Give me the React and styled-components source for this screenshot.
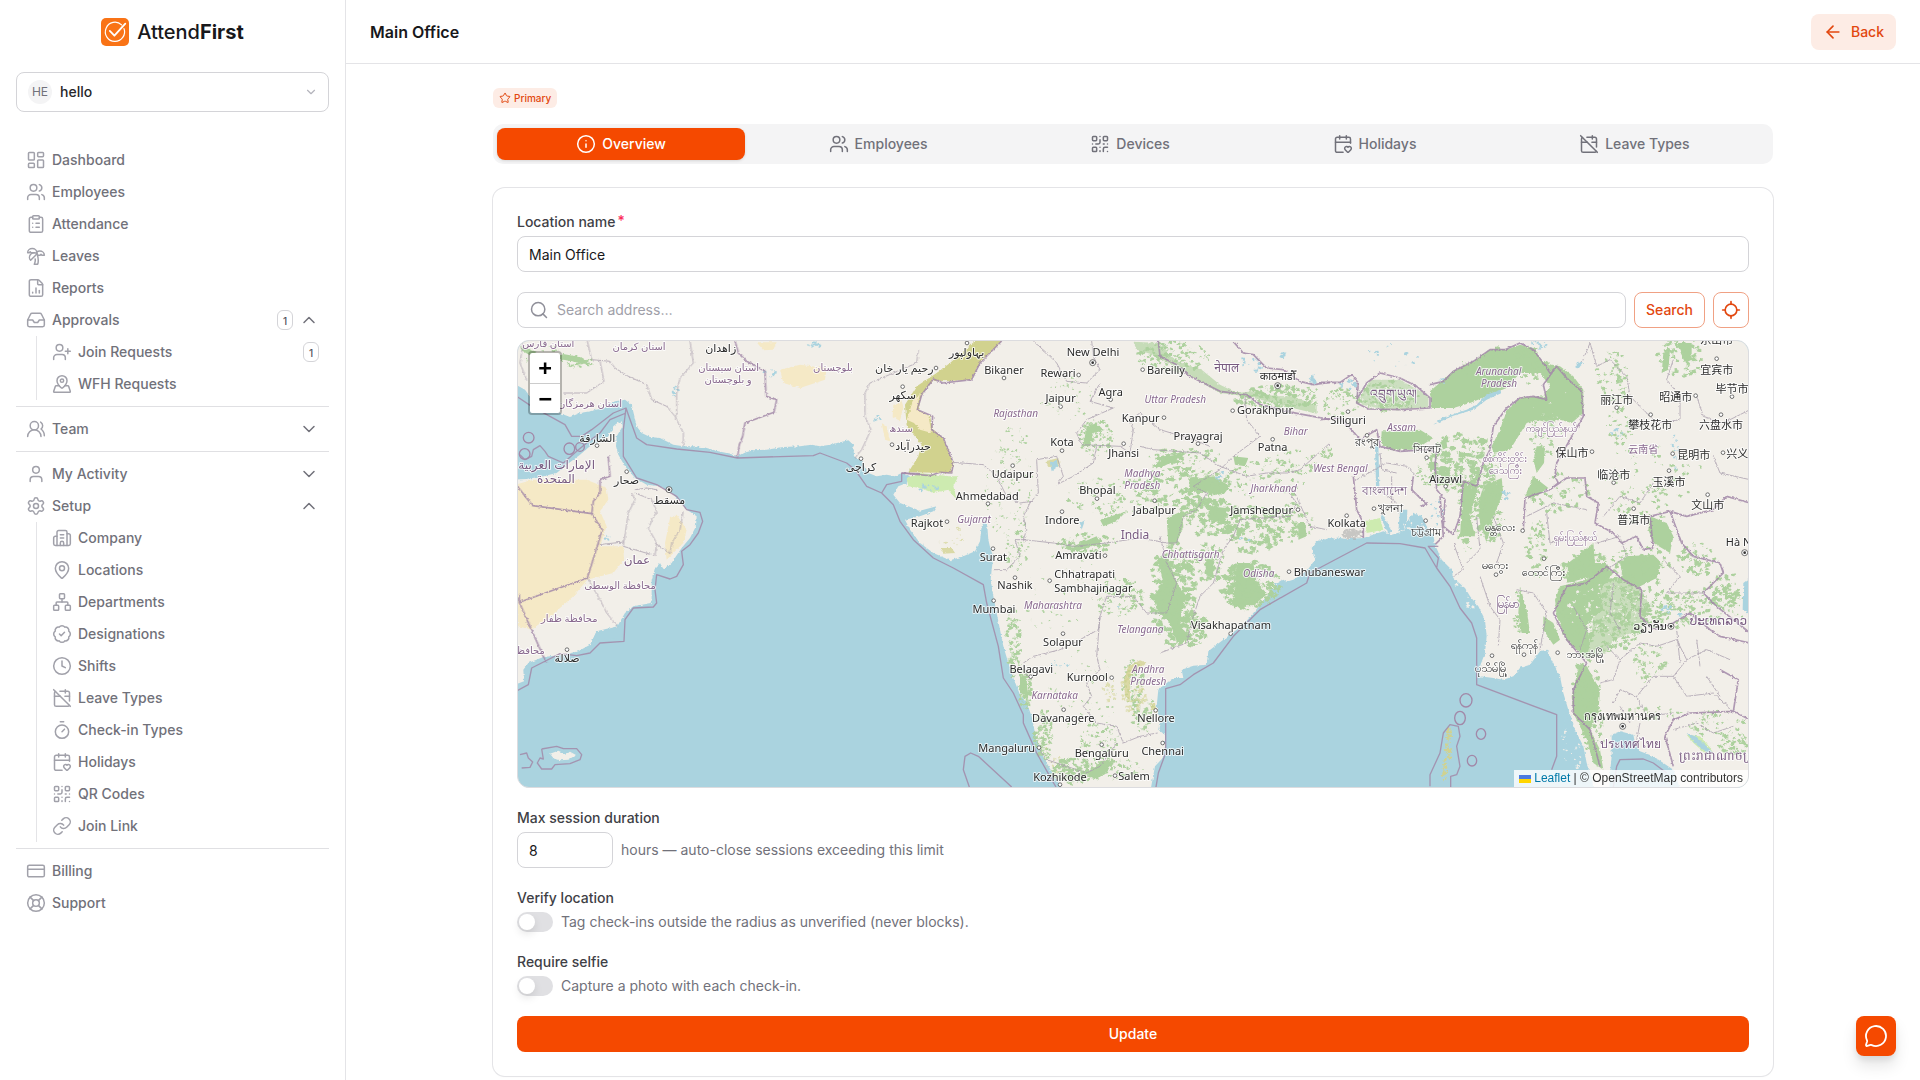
import React from "react";
import styled, { createGlobalStyle, css } from "styled-components";
import {
  ArrowLeft, BadgeCheck, Building2, CalendarHeart, CalendarOff, ChevronDown, ChevronUp,
  ClipboardList, Clock, CreditCard, FileChartColumn, Inbox, Info, LayoutDashboard, LifeBuoy,
  Link, Locate, MapPin, MapPinned, MessageCircle, Network, QrCode, Search, Settings, Star,
  Timer, TreePalm, User, UserPlus, Users, UsersRound,
} from "lucide-react";

const GlobalStyle = createGlobalStyle`
  *, *::before, *::after { box-sizing: border-box; }
  body { margin: 0; background: #fff; color: #27272a; font: 500 14px/20px Inter, "Open Sans", sans-serif; }
  button, input { font: inherit; color: inherit; margin: 0; }
  button { cursor: pointer; padding: 0; border: 0; background: none; }
  ul { list-style: none; margin: 0; padding: 0; }
  a { color: inherit; text-decoration: none; }
`;

/* ---------- shell ---------- */
const Shell = styled.div`
  display: grid;
  grid-template-columns: 346px minmax(0, 1fr);
  height: 100vh;
`;
const Sidebar = styled.aside`
  border-right: 1px solid #e4e4e7;
  padding: 16px;
  overflow-y: auto;
  scrollbar-width: none;
`;
const Brand = styled.a`
  display: flex;
  align-items: center;
  justify-content: center;
  gap: 8px;
  height: 32px;
  color: #18181b;
  font-size: 20px;
  line-height: 32px;
  b { font-weight: 700; }
`;
const OrgSwitcher = styled.button`
  display: flex;
  align-items: center;
  gap: 8px;
  width: 100%;
  height: 40px;
  margin: 24px 0 32px;
  padding: 0 10px 0 11px;
  border: 1px solid #d4d4d8;
  border-radius: 8px;
  text-align: left;
  svg { margin-left: auto; color: #b4b4bc; }
`;
const Avatar = styled.span`
  display: grid;
  place-items: center;
  width: 24px;
  height: 24px;
  border-radius: 50%;
  background: #f4f4f5;
  color: #71717a;
  font-size: 12px;
  font-weight: 400;
`;
const NavRow = styled.a`
  display: flex;
  align-items: center;
  gap: 6px;
  width: 100%;
  height: 32px;
  padding: 0 10px;
  color: #71717a;
  > svg:first-child { color: #a1a1aa; }
  > span:first-of-type { flex: 1; text-align: left; }
`;
const Count = styled.span`
  display: grid;
  place-items: center;
  width: 16px;
  height: 20px;
  border: 1px solid #d4d4d8;
  border-radius: 6px;
  font-size: 10px;
  color: #52525b;
`;
const SubNav = styled.ul`
  margin-left: 20px;
  padding-left: 5px;
  border-left: 1px solid #e4e4e7;
`;
const Rule = styled.hr`
  height: 1px;
  margin: 6px 0;
  border: 0;
  background: #e0e0e3;
`;

/* ---------- main ---------- */
const Main = styled.div`
  display: flex;
  flex-direction: column;
  min-width: 0;
  height: 100vh;
`;
const TopBar = styled.header`
  display: flex;
  flex: none;
  align-items: center;
  justify-content: space-between;
  height: 64px;
  padding: 0 24px;
  border-bottom: 1px solid #e4e4e7;
`;
const Title = styled.h1`
  margin: 0;
  color: #18181b;
  font-size: 16px;
  font-weight: 600;
  line-height: 24px;
`;
const Button = styled.button`
  display: flex;
  align-items: center;
  justify-content: center;
  gap: 8px;
  flex: none;
  height: 36px;
  padding: 0 12px;
  border-radius: 8px;
  ${({ $kind }) =>
    $kind === "soft" ? css`background: #fdece5; color: #e2470f;`
    : $kind === "outline" ? css`padding: 0 11px; border: 1px solid #f0a184; color: #e2470f; background: #fff;`
    : css`background: #f54900; color: #fff;`}
  ${({ $square }) => $square && css`width: 36px; padding: 0;`}
`;
const Scroller = styled.main`
  flex: 1;
  min-height: 0;
  padding: 24px;
  overflow-y: auto;
  scrollbar-width: none;
`;
const Column = styled.div`
  display: flex;
  flex-direction: column;
  align-items: flex-start;
  max-width: 1280px;
  margin: 0 auto;
`;
const PrimaryTag = styled.span`
  display: flex;
  align-items: center;
  gap: 3px;
  height: 20px;
  padding: 0 6px;
  border-radius: 6px;
  background: #fdece5;
  color: #e2470f;
  font-size: 10px;
  line-height: 16px;
`;
const Tabs = styled.nav`
  display: flex;
  gap: 4px;
  width: 100%;
  margin: 16px 0 24px;
  padding: 4px;
  border-radius: 10px;
  background: #f4f4f5;
`;
const Tab = styled.button`
  display: flex;
  flex: 1 1 auto;
  align-items: center;
  justify-content: center;
  gap: 6px;
  height: 32px;
  border-radius: 8px;
  color: ${({ $active }) => ($active ? "#fff" : "#71717a")};
  background: ${({ $active }) => ($active ? "#f54900" : "transparent")};
  box-shadow: ${({ $active }) => ($active ? "0 1px 3px rgba(0,0,0,.12)" : "none")};
`;
const Card = styled.form`
  display: flex;
  flex-direction: column;
  gap: 20px;
  width: 100%;
  padding: 24px;
  border-radius: 12px;
  box-shadow: 0 0 0 1px #e4e4e7, 0 1px 2px rgba(0,0,0,.04);
`;
const Field = styled.div`
  display: flex;
  flex-direction: column;
  align-items: flex-start;
  gap: 4px;
`;
const Label = styled.label`
  color: #3f3f46;
  sup { margin-left: 2px; color: #fb2c5a; font-size: 14px; line-height: 0; vertical-align: 1px; }
`;
const Input = styled.input`
  width: ${({ $short }) => ($short ? "96px" : "100%")};
  height: 36px;
  padding: 0 11px;
  border: 1px solid #d4d4d8;
  border-radius: 8px;
  background: #fff;
  color: #18181b;
  font-weight: 400;
  outline: 0;
  appearance: textfield;
`;
const Inline = styled.div`
  display: flex;
  align-items: center;
  gap: 8px;
  width: 100%;
`;
const Hint = styled.span`
  color: #71717a;
  font-weight: 400;
`;
const SearchBox = styled.label`
  display: flex;
  flex: 1;
  align-items: center;
  gap: 8px;
  height: 36px;
  padding: 0 11px;
  border: 1px solid #d4d4d8;
  border-radius: 8px;
  color: #8f8f99;
  input { flex: 1; min-width: 0; border: 0; padding: 0; outline: 0; background: none; }
  input::placeholder { color: #9f9fa9; font-weight: 400; opacity: 1; }
`;
const AddressBlock = styled.div`
  display: flex;
  flex-direction: column;
  gap: 12px;
`;
const Switch = styled.input`
  appearance: none;
  flex: none;
  display: flex;
  width: 36px;
  height: 20px;
  margin: 0;
  padding: 2px;
  border-radius: 10px;
  background: #e0e0e3;
  &::before {
    content: "";
    width: 16px;
    height: 16px;
    border-radius: 50%;
    background: #fff;
    box-shadow: 0 4px 8px rgba(0,0,0,.1);
  }
  &:checked { justify-content: flex-end; background: #f54900; }
`;
const ChatButton = styled.button`
  position: fixed;
  right: 24px;
  bottom: 24px;
  display: grid;
  place-items: center;
  width: 40px;
  height: 40px;
  border-radius: 8px;
  background: #f54900;
  color: #fff;
  box-shadow: 0 10px 15px rgba(0,0,0,.1), 0 4px 6px rgba(0,0,0,.08);
`;

/* ---------- map ---------- */
const MapFrame = styled.div`
  position: relative;
  height: 448px;
  overflow: hidden;
  border: 1px solid #dcdcdf;
  border-radius: 12px;
  background: #aad3df;
  > svg { display: block; width: 100%; height: 100%; }
`;
const ZoomControl = styled.div`
  position: absolute;
  top: 10px;
  left: 10px;
  overflow: hidden;
  border: 2px solid rgba(0,0,0,.25);
  border-radius: 4px;
  background: #fff;
  background-clip: padding-box;
`;
const ZoomButton = styled.button`
  display: block;
  width: 30px;
  height: 30px;
  color: #000;
  font: 700 22px/30px "DejaVu Sans Mono", monospace;
  & + & { border-top: 1px solid #ccc; }
`;
const Attribution = styled.div`
  position: absolute;
  right: 0;
  bottom: 0;
  padding: 0 5px;
  background: rgba(255,255,255,.8);
  color: #333;
  font: 400 12px/17px "Liberation Sans", Arial, sans-serif;
  a { color: #0078a8; }
  svg { vertical-align: -1px; }
`;

const Land = styled.path`fill: #f2efe9;`;
const Water = styled.path`fill: #aad3df;`;
const Sand = styled.path`fill: #f5e9c6;`;
const Forest = styled.path`fill: #add19e;`;
const Scrub = styled.path`fill: #d1d28e;`;
const Marsh = styled.path`fill: #cdebb0;`;
const Country = styled.path`
  fill: none;
  stroke: #a288a8;
  stroke-opacity: 0.85;
  stroke-width: ${({ $w }) => $w || 5};
  stroke-linejoin: round;
`;
const Province = styled.path`
  fill: none;
  stroke: #a79cab;
  stroke-opacity: 0.75;
  stroke-width: 3;
`;
const MapText = styled.text`
  font-family: "Noto Sans", "Noto Sans CJK SC", "DejaVu Sans", sans-serif;
  font-weight: 400;
  text-anchor: middle;
  paint-order: stroke;
  stroke: rgba(255,255,255,.75);
  stroke-width: 6px;
  stroke-linejoin: round;
  ${({ $t }) =>
    $t === "state" ? css`font-size: 30px; font-style: italic; fill: #89698f;`
    : $t === "region" ? css`font-size: 30px; fill: #89698f;`
    : $t === "country" ? css`font-size: 36px; fill: #785a80;`
    : css`font-size: 33px; fill: #2b2b2b;`}
`;
const Dot = styled.circle`fill: #fff; stroke: #555; stroke-width: 2.5;`;

/* small irregular patches spread over an ellipse: [cx, cy, rx, ry, count, size] */
function patches(list, seed) {
  let s = seed;
  const rnd = () => ((s = (s * 16807) % 2147483647) / 2147483647);
  let d = "";
  for (const [cx, cy, rx, ry, n, size] of list) {
    for (let i = 0; i < n; i++) {
      const a = rnd() * 6.283, r = Math.sqrt(rnd());
      const x = cx + Math.cos(a) * rx * r, y = cy + Math.sin(a) * ry * r;
      const m = size * (0.25 + rnd());
      for (let k = 0; k < 7; k++) {
        const t = (k / 7) * 6.283, q = m * (0.35 + rnd() * 0.9);
        d += `${k ? "L" : "M"}${(x + Math.cos(t) * q).toFixed(0)} ${(y + Math.sin(t) * q * 0.8).toFixed(0)}`;
      }
      d += "Z";
    }
  }
  return d;
}

const westLabels = [
  ["region", 145, 51, "استان فارس"], ["region", 417, 62, "استان کرمان"], ["city", 662, 68, "زاهدان"],
  ["region", 686, 123, "استان سیستان"], ["region", 684, 160, "و بلوچستان"], ["region", 999, 123, "بلوچستان"],
  ["region", 270, 233, "استان هرمزگان"], ["city", 292, 336, "الشارقة"], ["country", 170, 417, "الإمارات العربية"],
  ["country", 168, 461, "المتحدة"], ["city", 380, 462, "صحار"], ["city", 508, 522, "مسقط"],
  ["country", 411, 704, "عمان"], ["region", 360, 777, "محافظة الوسطى"], ["region", 208, 876, "محافظة ظفار"],
  ["region", 85, 974, "محافظة"], ["city", 201, 996, "صلالة"], ["city", 1083, 423, "کراچی"],
  ["region", 1203, 308, "سندھ"], ["city", 1239, 361, "حیدرآباد"], ["city", 1208, 208, "سکھر"], ["city", 1213, 128, "رحیم یار خان"],
];
const indiaLabels = [
  ["city", 200, 78, "بہاولپور"], ["city", 312, 132, "Bikaner"], ["city", 579, 80, "New Delhi"], ["city", 474, 143, "Rewari"],
  ["city", 798, 132, "Bareilly"], ["country", 980, 126, "नेपाल"], ["city", 1133, 150, "काठमाडौँ"], ["city", 482, 218, "Jaipur"],
  ["city", 632, 198, "Agra"], ["state", 826, 221, "Uttar Pradesh"], ["state", 347, 262, "Rajasthan"], ["city", 722, 277, "Kanpur"],
  ["city", 1095, 254, "Gorakhpur"], ["state", 1187, 316, "Bihar"], ["city", 486, 350, "Kota"], ["city", 671, 383, "Jhansi"],
  ["city", 894, 331, "Prayagraj"], ["city", 1118, 364, "Patna"], ["city", 338, 444, "Udaipur"], ["state", 727, 443, "Madhya"],
  ["state", 727, 479, "Pradesh"], ["city", 592, 494, "Bhopal"], ["city", 262, 510, "Ahmedabad"], ["state", 1121, 488, "Jharkhand"],
  ["city", 763, 554, "Jabalpur"], ["city", 1085, 554, "Jamshedpur"], ["city", 487, 582, "Indore"], ["state", 222, 581, "Gujarat"],
  ["city", 81, 591, "Rajkot"], ["country", 705, 629, "India"], ["city", 280, 693, "Surat"], ["city", 535, 689, "Amravati"],
  ["state", 872, 685, "Chhattisgarh"], ["city", 554, 746, "Chhatrapati"], ["city", 580, 787, "Sambhajinagar"], ["city", 345, 779, "Nashik"],
  ["state", 1076, 741, "Odisha"], ["city", 282, 851, "Mumbai"], ["state", 459, 839, "Maharashtra"], ["state", 721, 909, "Telangana"],
  ["city", 993, 899, "Visakhapatnam"], ["city", 489, 950, "Solapur"], ["city", 394, 1031, "Belagavi"], ["city", 562, 1055, "Kurnool"],
  ["state", 745, 1031, "Andhra"], ["state", 745, 1067, "Pradesh"], ["state", 464, 1109, "Karnataka"], ["city", 490, 1178, "Davanagere"],
  ["city", 768, 1177, "Nellore"], ["city", 320, 1266, "Mangaluru"], ["city", 605, 1283, "Bengaluru"], ["city", 788, 1275, "Chennai"],
  ["city", 480, 1354, "Kozhikode"], ["city", 702, 1350, "Salem"],
];
const eastLabels = [
  ["state", 536, 136, "Arunachal"], ["state", 537, 172, "Pradesh"], ["country", 219, 205, "འབྲུག་ཡུལ།"], ["city", 84, 282, "Siliguri"],
  ["state", 245, 305, "Assam"], ["city", 141, 350, "রংপুর"], ["city", 320, 369, "সিলেট"], ["state", 61, 428, "West Bengal"],
  ["city", 377, 459, "Aizawl"], ["country", 193, 497, "বাংলাদেশ"], ["city", 212, 548, "খুলনা"], ["city", 80, 591, "Kolkata"],
  ["city", 317, 620, "চট্টগ্রাম"], ["city", 28, 738, "Bhubaneswar"], ["region", 694, 306, "ကချင်ပြည်နယ်"], ["region", 555, 396, "စစ်ကိုင်းတိုင်း"],
  ["region", 556, 433, "ဒေသကြီး"], ["city", 540, 605, "မန္တလေး"], ["region", 766, 634, "ရှမ်းပြည်နယ်"], ["city", 527, 717, "မကွေး"],
  ["city", 672, 740, "တောင်ကြီး"], ["country", 563, 835, "မြန်မာ"], ["city", 612, 959, "ရန်ကုန်"], ["city", 514, 1028, "ပုသိမ်မြို့"],
  ["city", 795, 985, "ဘားအံမြို့"], ["city", 1190, 42, "乐山市"], ["city", 1190, 132, "宜宾市"], ["city", 1236, 190, "毕节市"],
  ["city", 890, 223, "丽江市"], ["city", 1067, 213, "昭通市"], ["city", 991, 299, "攀枝花市"], ["city", 1203, 299, "六盘水市"],
  ["region", 970, 371, "云南省"], ["city", 756, 383, "保山市"], ["city", 1121, 388, "昆明市"], ["city", 1268, 385, "兴义市"],
  ["city", 881, 447, "临沧市"], ["city", 1047, 468, "玉溪市"], ["city", 1163, 539, "文山市"], ["city", 941, 582, "普洱市"],
  ["city", 1270, 650, "Hà Nội"], ["city", 990, 902, "ວຽງຈັນ"], ["country", 1195, 886, "ປະເທດລາວ"], ["city", 908, 1172, "กรุงเทพมหานคร"],
  ["country", 930, 1255, "ประเทศไทย"], ["country", 1190, 1292, "ព្រះរាជាណាចក្រ"],
];
const Labels = ({ items }) =>
  items.map(([t, x, y, s], i) => <MapText key={i} $t={t} x={x} y={y}>{s}</MapText>);
const Dots = ({ at }) => at.map(([x, y], i) => <Dot key={i} cx={x} cy={y} r="5.5" />);
const Capital = ({ x, y }) => <g><Dot cx={x} cy={y} r="9" /><circle cx={x} cy={y} r="4" fill="#333" /></g>;

const AreaMap = () => (
  <svg viewBox="54 34 3690 1338" preserveAspectRatio="xMidYMid slice" role="img" aria-label="Map of South Asia">
    <defs>
      <filter id="rough" x="-5%" y="-5%" width="110%" height="110%">
        <feTurbulence type="fractalNoise" baseFrequency="0.12" numOctaves="2" seed="4" result="n" />
        <feDisplacementMap in="SourceGraphic" in2="n" scale="9" xChannelSelector="R" yChannelSelector="G" />
      </filter>
    </defs>
    <g filter="url(#rough)">
      <Land d="M30 0V155L75 180 100 215 130 235 165 245 210 262 240 250 270 245 310 235 345 215 375 210 395 225 402 255 410 290 425 310 450 322 480 325 520 345 550 350 590 350 620 355 655 365 690 372 712 380 730 370 760 362 800 360 850 352 900 350 935 345 960 350 990 345 1020 338 1045 332 1060 345 1062 380 1085 395 1105 430 1130 440 1160 435 1185 440 1205 430 1290 432V0Z" />
      <Land d="M30 450L80 448 130 440 170 430 200 405 240 375 275 345 300 335 325 320 340 290 352 280 365 275 368 290 350 320 348 350 355 375 375 410 405 445 440 465 480 470 515 490 545 520 560 540 590 560 588 590 570 625 545 655 528 680 515 700 490 718 480 700 465 715 455 750 455 820 400 830 375 850 352 890 290 905 280 925 270 945 235 965 190 975 130 982 85 1000 70 1020 72 1055 30 1070Z" />
      <Land d="M150 1272L175 1263 195 1272 210 1266 228 1276 205 1290 180 1292 160 1285Z" />
      <Sand d="M30 470L100 450 260 450 320 475 325 510 300 545 320 590 300 650 370 650 372 690 340 730 262 750 220 800 140 870 95 900 54 890ZM510 565L530 555 560 600 550 640 520 670 500 690 495 640ZM840 120L900 105 980 115 975 150 900 175 850 160ZM1180 225L1210 220 1225 250 1200 275 1178 260ZM770 38H830L820 60 790 62ZM1145 280L1160 290 1170 335 1155 330Z" />
      <Forest d="M60 50L110 66 95 80 64 62ZM185 72L240 82 275 105 240 100 180 88Z" />
      <Water d="M290 905L370 895 368 925 300 932 272 945Z" />
      <Forest d={patches([[130, 80, 60, 40, 40, 5], [230, 95, 50, 18, 40, 6]], 21)} />
      <Water d={patches([[810, 128, 20, 14, 10, 6], [525, 185, 10, 15, 6, 6], [325, 625, 12, 8, 6, 5], [945, 45, 25, 8, 9, 6], [1130, 265, 14, 8, 6, 5]], 5)} />
    </g>

    <g transform="translate(1200 0)" filter="url(#rough)">
      <Land d="M0 0H1310V628L1290 625 1250 635 1235 655 1245 690 1220 725 1180 750 1130 765 1090 815 1060 850 1030 885 990 915 950 945 925 965 920 1005 880 1008 845 1020 850 1045 820 1045 800 1060 775 1080 770 1130 780 1170 775 1200 795 1215 795 1250 788 1285 765 1310 750 1390H495L470 1350 440 1300 420 1260 405 1210 395 1160 380 1120 360 1095 340 1045 325 1000 310 950 300 900 290 850 280 800 272 750 275 720 280 680 272 660 265 630 262 590 255 570 245 590 240 635 225 665 190 680 150 692 100 670 60 640 30 600 15 570 60 560 100 545 110 530 60 543 0 520-20 495-5 470 20 460 30 440 0 430Z" />
      <Scrub d="M225 34H305L240 100 215 150 130 155 100 150 65 195 55 240 90 260 100 300 130 325 160 400 155 430 25 428 55 380 65 345 20 290 15 225 50 170 110 130 150 100Z" />
      <Sand d="M60 190L50 240 85 258 95 310 60 300 42 280 20 270 40 210ZM0 200L10 230 0 275Z" />
      <Marsh d="M20 445L60 430 150 440 175 440 160 470 170 510 145 480 100 490 60 475 25 470Z" />
      <Forest opacity=".65" d="M700 36L775 40 830 95 905 120 960 165 1010 190 1060 185 1120 200 1180 200 1240 225 1290 235V262L1200 240 1120 220 1040 200 960 190 890 150 830 115 760 75 710 60Z" />
      <Forest d="M560 290L590 280 610 300 580 310 570 350 550 345ZM755 410L800 380 860 370 830 390 780 415ZM870 450L940 440 990 470 970 495 890 485 865 490ZM800 565L845 545 850 590 830 640 805 645ZM775 690L800 670 830 760 860 800 845 840 840 890 880 930 830 935 810 880 770 840 760 800 790 760ZM930 530L980 535 975 580 930 570ZM915 690L940 690 940 745 920 740ZM1010 700L1060 700 1070 760 1100 790 1060 830 1000 830 1005 780ZM1195 580L1215 580 1220 620 1195 630ZM560 1340L600 1295 640 1290 620 1330 590 1350ZM520 650L590 620 600 640 530 665ZM600 570L680 545 650 575 610 590ZM360 1040L378 1040 385 1100 360 1090ZM1000 380L1045 385 1035 410 1005 405Z" />
      <Forest d={patches([
        [590, 325, 50, 55, 110, 6], [650, 500, 150, 60, 100, 6], [560, 640, 90, 28, 100, 7], [850, 470, 150, 60, 150, 9],
        [860, 380, 110, 25, 70, 8], [930, 560, 90, 60, 120, 10], [1060, 600, 90, 70, 150, 9], [1170, 580, 70, 60, 110, 7],
        [1050, 770, 90, 75, 210, 10], [820, 790, 70, 160, 230, 10], [870, 900, 60, 50, 70, 9], [930, 700, 50, 60, 80, 7],
        [660, 800, 70, 60, 90, 7], [350, 660, 40, 60, 60, 5], [340, 930, 22, 110, 100, 6], [375, 1080, 20, 60, 90, 6],
        [430, 1220, 28, 80, 130, 6], [520, 1325, 60, 40, 130, 8], [600, 1240, 60, 70, 90, 5], [700, 1060, 35, 70, 90, 6],
        [730, 1150, 35, 60, 60, 6], [320, 480, 80, 140, 90, 4], [340, 350, 60, 60, 40, 4], [500, 200, 80, 70, 50, 4],
        [1100, 450, 120, 60, 70, 7], [1170, 400, 100, 40, 50, 6], [1140, 200, 150, 35, 170, 8], [820, 80, 110, 45, 130, 7], [650, 1320, 90, 30, 50, 6],
        [500, 800, 130, 130, 60, 4], [550, 1100, 100, 140, 60, 4],
      ], 77)} />
      <Scrub opacity=".75" d="M685 1010L720 992 740 1000 690 1040 690 1110 675 1100 672 1050ZM435 395L475 385 480 410 445 412ZM120 655L155 655 165 670 130 672ZM750 1120L765 1120 770 1150 755 1140Z" />
      <Scrub opacity=".6" d={patches([[700, 1080, 40, 80, 45, 7], [630, 1080, 20, 40, 20, 6], [145, 610, 60, 40, 16, 5], [450, 1290, 30, 50, 25, 5]], 41)} />
      <Water d="M450 400L470 390 475 410 455 425ZM540 580L555 572 545 600ZM1125 765L1150 750 1160 757 1130 772Z" />
      <Water d={patches([[1060, 100, 40, 25, 12, 7], [1235, 145, 25, 15, 12, 8], [1150, 75, 8, 12, 5, 6], [960, 440, 12, 18, 6, 6], [480, 1005, 30, 12, 6, 5], [1030, 625, 20, 10, 6, 5], [650, 820, 10, 20, 5, 4], [85, 475, 30, 10, 8, 7]], 9)} />
    </g>

    <g transform="translate(2460 0)" filter="url(#rough)">
      <Land d="M-10 0H1310V1390H1085L1060 1320 1030 1300 1000 1280 960 1265 945 1240 940 1215 900 1205 875 1215 875 1280 870 1330 868 1390H822L815 1340 800 1300 790 1250 765 1200 745 1140 730 1090 720 1040 700 1000 680 960 660 965 630 1005 600 1015 580 1040 550 1050 520 1045 480 1040 480 1010 495 970 500 920 495 870 475 830 450 800 435 775 400 745 395 720 365 690 345 645 340 615 320 590 305 560 280 550 265 570 250 605 215 615 190 605 130 625 80 628 40 622-10 630Z" />
      <Forest d="M330 185L400 125 460 95 510 60 560 60 600 45 640 55 670 100 720 110 760 140 790 180 790 250 755 280 720 270 690 280 650 270 620 280 570 360 520 370 515 350 540 300 560 240 600 205 670 200 690 170 660 130 600 130 560 175 500 200 450 220 400 235 335 235ZM185 305L240 305 300 300 340 325 285 360 210 360 183 345ZM490 470L545 445 550 490 520 560 500 640 480 580 475 520ZM430 450L475 465 450 560 465 620 420 620ZM640 440L685 475 640 505 615 500ZM650 350L675 350 672 400 650 430 640 390ZM600 770L620 840 630 910 605 910 595 850ZM745 700L820 640 825 700 860 700 870 720 800 745 740 760ZM720 770L800 750 860 710 880 730 840 780 850 840 800 880 810 940 800 990 740 930 710 860 705 810ZM990 560L1040 580 1060 620 1050 670 1000 640 985 600ZM920 680L1000 675 1025 700 1010 745 950 775 910 750 900 700ZM780 1000L800 1010 840 1080 835 1150 810 1200 840 1260 850 1320 820 1300 800 1230 760 1150 755 1100ZM1030 70L1050 60 1045 120 1025 130ZM1070 40H1115L1115 90 1095 100ZM360 410L390 420 385 470 365 460ZM670 860L700 880 720 930 700 945 670 900Z" />
      <Forest opacity=".55" d="M120 205L150 150 240 150 300 185 325 200 325 235 200 240 125 225Z" />
      <Forest opacity=".6" d="M840 760L910 740 965 780 990 830 960 900 880 930 860 970 800 990Z" />
      <Marsh d="M135 575L180 565 190 600 140 610ZM1100 1215L1140 1220 1180 1265 1160 1275 1120 1240Z" />
      <Forest d={patches([
        [560, 110, 140, 60, 90, 9], [200, 200, 100, 45, 130, 7], [430, 400, 110, 90, 210, 10], [510, 540, 45, 100, 100, 8], [440, 560, 30, 110, 70, 8],
        [680, 320, 50, 60, 40, 7], [720, 490, 90, 60, 60, 7], [650, 660, 30, 90, 60, 7], [600, 850, 20, 70, 40, 6], [800, 720, 70, 60, 90, 9],
        [850, 850, 130, 120, 260, 9], [950, 820, 110, 90, 150, 8], [960, 700, 90, 50, 60, 8], [1060, 840, 90, 60, 70, 7], [1180, 830, 110, 60, 90, 8],
        [880, 140, 50, 80, 70, 7], [900, 290, 40, 60, 50, 6], [1080, 80, 70, 60, 60, 8], [1000, 430, 150, 90, 60, 6], [960, 520, 100, 60, 50, 7],
        [1130, 690, 60, 50, 50, 8], [1210, 780, 50, 60, 50, 8], [990, 1000, 50, 60, 70, 6], [1190, 1180, 90, 40, 60, 6], [1000, 1150, 80, 20, 30, 6],
        [1240, 1240, 45, 35, 60, 7], [820, 1200, 35, 90, 90, 7], [800, 1060, 40, 70, 60, 9], [60, 220, 60, 50, 60, 6], [20, 370, 22, 20, 20, 6], [320, 430, 30, 40, 30, 5],
      ], 133)} />
      <Land d={patches([[850, 840, 110, 80, 60, 5], [460, 420, 90, 80, 30, 4], [690, 220, 90, 50, 10, 3], [200, 200, 80, 30, 25, 4], [940, 840, 60, 60, 30, 5]], 55)} />
      <Water d="M365 265L440 240 470 225 500 195 540 180 545 190 500 210 460 240 400 258 340 285ZM165 340L175 345 178 470 168 470ZM1270 760L1290 745V855L1268 840ZM1100 1210L1130 1222 1160 1250 1180 1270 1160 1268 1130 1245ZM180 560L188 555 215 605 205 612ZM240 540L262 540 260 600 235 605Z" />
      <Water d={patches([[85, 165, 22, 14, 10, 8], [230, 75, 90, 45, 14, 6], [370, 150, 20, 10, 6, 6], [650, 45, 30, 14, 12, 6], [780, 110, 10, 20, 7, 7], [890, 310, 18, 18, 10, 5], [1065, 370, 12, 60, 14, 5], [555, 495, 10, 12, 4, 6], [350, 550, 20, 50, 14, 5], [1055, 845, 30, 20, 8, 6], [740, 1190, 15, 60, 14, 6]], 13)} />
      <Scrub d={patches([[387, 1215, 9, 20, 20, 6], [385, 1260, 9, 30, 24, 6], [375, 1325, 8, 40, 26, 6]], 3)} />
      <Land d={patches([[430, 740, 30, 40, 16, 6], [455, 800, 20, 30, 12, 6], [450, 832, 14, 5, 4, 6], [770, 1290, 15, 50, 14, 5], [735, 1230, 10, 70, 12, 4], [280, 590, 30, 20, 10, 5]], 31)} />
      <path fill="#aaa" opacity=".6" d={patches([[98, 612, 30, 14, 90, 6]], 71)} />
    </g>

    {/* administrative boundaries */}
    <g filter="url(#rough)">
      <Country d="M705 34L715 70 740 95 795 125 798 200 830 210 822 248 735 280 728 320 718 345 712 385" />
      <Country d="M52 470L98 528 275 552 280 515 300 490 300 450 330 440 325 380M275 552L307 600 262 745 58 818 138 998M58 818V795" />
      <Province d="M262 34L275 90 330 95 345 115 385 140 440 165 455 210 500 230 525 260 550 310V350M570 34L580 100 540 145 530 190 530 260M300 95L312 155 260 190 190 190M395 490L405 510 385 550 370 650 465 678 470 640 445 595 470 545 455 510 405 490M465 640L510 672 515 640 540 600 550 545M297 645L370 637M262 745L300 810 320 850 352 890M1255 60L1250 100 1110 160 1095 190 1095 260 1113 300 1085 360 1065 385M70 34L60 100 80 150M405 480L440 475 470 480" />
      <g transform="translate(1200 0)">
        <Country d="M305 34L240 100 215 150 130 160 100 148 65 195 52 240 98 260 95 300 130 325 160 400 155 430 120 428 90 438 0 430M775 34L780 80 830 105 870 140 960 185 1040 195 1080 225 1160 245 1290 270M1000 36L1030 70 1060 75 1100 115 1150 120 1200 155 1240 165 1290 158" />
        <Province d="M160 398L250 405 290 440 320 500 360 520 395 515M400 34L440 70 470 100 500 155 560 160 600 120 580 80 575 34M600 160L570 215 640 235 560 270 530 310 545 345 660 350 690 370 700 300 690 270 720 250 780 300 880 330 930 350M410 390L470 380 490 440 470 465 520 440 580 400 590 350M410 390L415 490 390 520 370 560 380 600 370 630 460 640 520 650 620 640 720 625 800 640 830 640 850 560 890 540 920 490 880 470 960 420 980 400 1000 380 1080 320 1040 270 1035 200M720 350L760 360 900 370 960 410 1040 440 1100 430 1160 430 1200 420 1290 340M1160 480L1190 520 1170 560 1020 570 1000 620 970 660 940 760 900 800 880 860 860 940 780 970M620 800L600 860 595 900 540 930 480 960 400 980 370 1000 380 1040M600 860L590 980 600 1020 560 1060 575 1100 550 1130 590 1180 650 1190 670 1240 720 1220 770 1210M650 1240L600 1310 560 1330 500 1310 440 1290 410 1250M280 720L320 720 360 680 345 630 380 630M780 620L800 700 830 760 800 850 740 850 700 800 620 800M1180 480L1230 590 1280 600" />
      </g>
      <g transform="translate(2460 0)">
        <Country d="M0 158L60 158 95 135 115 160 110 220 145 238 240 240 330 235 330 205 290 170 240 145 180 130 140 160 110 210M330 165L370 155 400 125 460 95 510 60 555 60 600 40 640 60 670 100 690 130 710 110 740 145 785 185 790 260 750 330 710 400 705 440 715 460 690 480 615 505 610 600M690 480L740 445 795 445 800 500 835 520 825 580 880 610 905 640 950 620 970 660 1000 655M710 110L670 165 680 210 640 200 600 205 560 235 520 290 510 360 490 400 470 470 430 455 420 560 400 615 370 590 375 510 350 480 345 400 350 370M0 270L60 265 90 295 120 330 170 300 180 350 240 365 330 360 350 370M100 440L110 540 130 580 130 625M345 645L370 620 360 500M280 440L275 480 320 525 300 530M1000 655L990 560 1050 545 1100 560 1180 540 1220 500 1290 520M1050 545L1085 640 1120 680 1200 700 1210 730 1150 790 1190 830 1290 910M700 850L740 770 800 760 860 710 910 750 965 780 960 860 1000 900 1060 880 1110 850 1170 900 1200 920 1290 940M700 850L740 930 800 1000 760 1080 760 1150 810 1200 840 1310M1290 1170L1240 1145 1110 1150 1060 1170 1035 1220 1060 1310M1240 1145L1255 1050 1200 1020" />
        <Province d="M110 450L200 400 260 410 290 440M180 370L185 420 230 430M470 560L480 660 440 700M530 700L550 640 520 560M480 740L510 830 540 870 535 950M590 780L640 790 680 850 660 960M830 640L900 620 920 680 860 720M785 100L810 40 830 110 870 90 920 140 930 200 970 240 1010 280 1080 270 1080 200 1040 150 1060 90M1130 200L1150 260 1210 280 1290 240M1180 380L1200 430 1290 450M850 560L900 500 960 520 1000 460M860 950L900 990 880 1050 840 1060M900 990L960 940 1010 950 1070 930 1100 990 1060 1040 1000 1040 950 1100 900 1080 880 1120M1100 990L1160 960 1230 990M1060 1040L1100 1100 1180 1090 1240 1145M950 1100L980 1160 1060 1150M880 760L870 850 900 900M760 830L800 900 780 960M620 560L700 520 800 540M680 550L690 640 830 620M1030 690L1080 740 1040 790 1150 790M1060 1200L1130 1180 1180 1210 1240 1190M1070 900L1080 1000M1130 930L1140 1010M900 1130L930 1180M960 1180L950 1230M1200 1100L1160 1040M400 640L430 720 400 740M215 440V520M165 470L230 520" />
      </g>
    </g>

    {/* maritime boundaries */}
    <Country $w="4" d="M50 200L95 230 150 260 195 285 215 320 245 320 275 300 340 250 378 235 385 255 410 325 440 345 530 358 630 368 712 385 800 382 940 378 960 370 1040 400 1065 420 1100 470 1145 490 1180 525 1200 575 1240 630 1300 685 1360 715 1450 765 1460 820 1495 950 1510 1045 1540 1090 1570 1155 1570 1180 1610 1270 1655 1350 1668 1372M378 235L370 300 370 380 410 445 470 465 530 500 560 540 600 548 608 575 595 610 570 645 545 665 550 705 530 740 510 748 470 735 465 780 470 820 460 832 400 835 375 870 372 935 300 940 270 970 230 978 180 972 95 1015 85 1065 52 1083M60 375L75 390 95 380 100 360 120 348 135 365 145 380 190 400 230 365 260 340 300 310 330 270 378 250M1145 490L1160 465 1205 455V430L1260 432" />
    <Country $w="4" d="M1408 1372L1390 1320 1395 1280 1412 1270 1435 1280 1535 1372M1968 1372L1975 1330 1997 1270V1077L2040 1065 2080 1035 2140 1000 2200 920 2280 840 2420 760 2430 730 2600 640 2700 642 2775 655 2810 715 2815 685 2785 650 2815 650M2810 715L2850 770 2880 835 2915 880 2930 925V1065L3170 1155V1280L3155 1320M3340 1372L3350 1310 3360 1290 3430 1288 3460 1300 3500 1330M2790 1370V1335L2820 1270 2830 1210 2850 1185 2875 1190 2880 1220 2870 1250 2880 1310 2870 1335 2852 1340V1372M125 1258L170 1250 190 1257 230 1257 245 1275 240 1290 210 1302 165 1305 155 1318 125 1318 112 1300 120 1285 130 1288 125 1258M60 1275L80 1270 85 1285 98 1297 90 1313 65 1315" />
    {[[86, 324, 16, 16], [74, 373, 16, 16], [208, 357, 16, 17], [240, 352, 13, 13], [2898, 1112, 18, 20], [2880, 1165, 16, 20], [2943, 1213, 14, 16], [2916, 1293, 14, 16]].map(([x, y, a, b]) => (
      <ellipse key={`${x}-${y}`} cx={x} cy={y} rx={a} ry={b} fill="none" stroke="#a288a8" strokeWidth="4" />
    ))}

    <Dots at={[[291, 348], [380, 426], [201, 960], [1083, 387], [1176, 345], [1208, 171]]} />
    <Capital x={507} y={480} />
    <Labels items={westLabels} />
    <g transform="translate(1200 0)">
      <Dots at={[[312, 145], [536, 136], [728, 120], [482, 231], [632, 210], [792, 264], [998, 243], [486, 363], [671, 342], [894, 342], [1118, 329], [338, 408], [591, 507], [264, 522], [764, 513], [1194, 540], [486, 546], [141, 576], [279, 657], [615, 678], [449, 753], [345, 744], [1167, 726], [281, 813], [992, 912], [489, 912], [392, 1041], [635, 1044], [491, 1140], [767, 1142], [417, 1254], [605, 1245], [788, 1240], [480, 1365], [645, 1338], [201, 40], [108, 115]]} />
      <Capital x={578} y={99} />
      <Capital x={1133} y={168} />
      <Labels items={indiaLabels} />
    </g>
    <g transform="translate(2460 0)">
      <Dots at={[[84, 246], [141, 317], [320, 384], [377, 470], [162, 537], [80, 558], [317, 573], [608, 603], [528, 735], [672, 687], [516, 978], [612, 975], [713, 969], [1190, 87], [1236, 201], [890, 234], [1127, 198], [992, 255], [1203, 255], [816, 366], [1058, 372], [1209, 369], [881, 459], [1047, 423], [1163, 495], [941, 537]]} />
      <Capital x={1274} y={669} />
      <Capital x={1053} y={890} />
      <Capital x={908} y={1190} />
      <Labels items={eastLabels} />
    </g>
  </svg>
);

const icon = { size: 20, strokeWidth: 1.8, "aria-hidden": true };

const NavLink = ({ of: Icon, children, count }) => (
  <li><NavRow href="#"><Icon {...icon} /><span>{children}</span>{count && <Count>{count}</Count>}</NavRow></li>
);
const NavGroup = ({ of: Icon, label, open, count, children }) => {
  const Chevron = open ? ChevronUp : ChevronDown;
  return (
    <li>
      <NavRow as="button" type="button" aria-expanded={!!open}>
        <Icon {...icon} /><span>{label}</span>{count && <Count>{count}</Count>}<Chevron {...icon} />
      </NavRow>
      {open && <SubNav>{children}</SubNav>}
    </li>
  );
};

const LogoMark = () => (
  <svg width="28" height="28" viewBox="0 0 28 28" fill="none" stroke="#fff" aria-hidden="true">
    <rect width="28" height="28" rx="5" fill="#f97316" stroke="none" />
    <path d="M20.6 6.9A9.6 9.6 0 1 0 23 10.6" strokeWidth="1.2" strokeLinecap="round" />
    <path d="M8.8 12.9l4.6 4.8L24.3 5.6" strokeWidth="1.8" strokeLinecap="round" strokeLinejoin="round" />
  </svg>
);

const tabs = [["Overview", Info], ["Employees", Users], ["Devices", QrCode], ["Holidays", CalendarHeart], ["Leave Types", CalendarOff]];

export default function App() {
  return (
    <>
      <GlobalStyle />
      <Shell>
        <Sidebar>
          <Brand href="#"><LogoMark /><span>Attend<b>First</b></span></Brand>
          <OrgSwitcher type="button"><Avatar>HE</Avatar>hello<ChevronDown size={14} strokeWidth={2} /></OrgSwitcher>
          <nav>
            <ul>
              <NavLink of={LayoutDashboard}>Dashboard</NavLink>
              <NavLink of={Users}>Employees</NavLink>
              <NavLink of={ClipboardList}>Attendance</NavLink>
              <NavLink of={TreePalm}>Leaves</NavLink>
              <NavLink of={FileChartColumn}>Reports</NavLink>
              <NavGroup of={Inbox} label="Approvals" count="1" open>
                <NavLink of={UserPlus} count="1">Join Requests</NavLink>
                <NavLink of={MapPinned}>WFH Requests</NavLink>
              </NavGroup>
            </ul>
            <Rule />
            <ul><NavGroup of={UsersRound} label="Team" /></ul>
            <Rule />
            <ul>
              <NavGroup of={User} label="My Activity" />
              <NavGroup of={Settings} label="Setup" open>
                <NavLink of={Building2}>Company</NavLink>
                <NavLink of={MapPin}>Locations</NavLink>
                <NavLink of={Network}>Departments</NavLink>
                <NavLink of={BadgeCheck}>Designations</NavLink>
                <NavLink of={Clock}>Shifts</NavLink>
                <NavLink of={CalendarOff}>Leave Types</NavLink>
                <NavLink of={Timer}>Check-in Types</NavLink>
                <NavLink of={CalendarHeart}>Holidays</NavLink>
                <NavLink of={QrCode}>QR Codes</NavLink>
                <NavLink of={Link}>Join Link</NavLink>
              </NavGroup>
            </ul>
            <Rule />
            <ul>
              <NavLink of={CreditCard}>Billing</NavLink>
              <NavLink of={LifeBuoy}>Support</NavLink>
            </ul>
          </nav>
        </Sidebar>

        <Main>
          <TopBar>
            <Title>Main Office</Title>
            <Button type="button" $kind="soft"><ArrowLeft {...icon} strokeWidth={2} />Back</Button>
          </TopBar>
          <Scroller>
            <Column>
              <PrimaryTag><Star size={12} strokeWidth={2} aria-hidden />Primary</PrimaryTag>
              <Tabs>
                {tabs.map(([name, Icon], i) => (
                  <Tab key={name} type="button" $active={i === 0}><Icon {...icon} />{name}</Tab>
                ))}
              </Tabs>
              <Card onSubmit={(e) => e.preventDefault()}>
                <Field>
                  <Label htmlFor="name">Location name<sup>*</sup></Label>
                  <Input id="name" defaultValue="Main Office" />
                </Field>
                <AddressBlock>
                  <Inline>
                    <SearchBox>
                      <Search {...icon} />
                      <input type="text" placeholder="Search address…" aria-label="Search address" />
                    </SearchBox>
                    <Button type="button" $kind="outline">Search</Button>
                    <Button type="button" $kind="outline" $square aria-label="Use my location"><Locate {...icon} strokeWidth={2} /></Button>
                  </Inline>
                  <MapFrame>
                    <AreaMap />
                    <ZoomControl>
                      <ZoomButton type="button" aria-label="Zoom in">+</ZoomButton>
                      <ZoomButton type="button" aria-label="Zoom out">−</ZoomButton>
                    </ZoomControl>
                    <Attribution>
                      <a href="#">
                        <svg width="12" height="8" viewBox="0 0 12 8" aria-hidden="true"><path fill="#4c7be1" d="M0 0h12v4H0z" /><path fill="#ffd500" d="M0 4h12v4H0z" /></svg>{" "}
                        Leaflet
                      </a>{" | © OpenStreetMap contributors"}
                    </Attribution>
                  </MapFrame>
                </AddressBlock>
                <Field>
                  <Label htmlFor="hours">Max session duration</Label>
                  <Inline>
                    <Input id="hours" type="number" defaultValue="8" $short />
                    <Hint>hours — auto-close sessions exceeding this limit</Hint>
                  </Inline>
                </Field>
                <Field>
                  <Label htmlFor="verify">Verify location</Label>
                  <Inline><Switch id="verify" type="checkbox" /><Hint>Tag check-ins outside the radius as unverified (never blocks).</Hint></Inline>
                </Field>
                <Field>
                  <Label htmlFor="selfie">Require selfie</Label>
                  <Inline><Switch id="selfie" type="checkbox" /><Hint>Capture a photo with each check-in.</Hint></Inline>
                </Field>
                <Button type="submit">Update</Button>
              </Card>
            </Column>
          </Scroller>
        </Main>
      </Shell>
      <ChatButton type="button" aria-label="Open chat"><MessageCircle size={24} strokeWidth={1.8} /></ChatButton>
    </>
  );
}
